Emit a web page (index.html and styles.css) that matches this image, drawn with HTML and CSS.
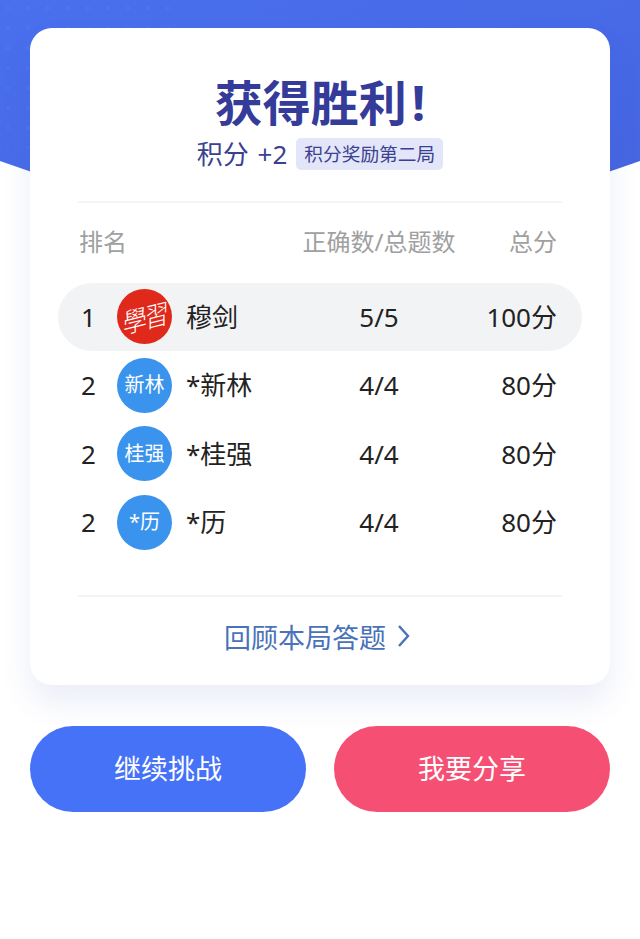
FILE: index.html
```html
<!DOCTYPE html>
<html lang="zh-CN">
  <head>
    <meta charset="UTF-8" />
    <meta name="viewport" content="width=device-width, initial-scale=1.0" />
    <title>获得胜利</title>
    <link rel="stylesheet" href="styles.css">
  </head>
  <body>
    <!-- Blue arc behind the card -->
    <svg class="hero-bg" width="640" height="230" viewBox="0 0 640 230">
      <defs>
        <linearGradient id="heroFill" x1="0" y1="0" x2="1" y2="1">
          <stop offset="0" stop-color="#4a70ee" />
          <stop offset="1" stop-color="#4564e0" />
        </linearGradient>
        <pattern id="heroDots" width="20" height="20" patternUnits="userSpaceOnUse">
          <circle cx="8" cy="8" r="2" fill="#fff" fill-opacity="0.03" />
        </pattern>
      </defs>
      <path d="M0 0H640V161Q320 278 0 161Z" fill="url(#heroFill)" />
      <rect x="0" y="0" width="180" height="28" fill="url(#heroDots)" />
      <rect x="0" y="28" width="30" height="120" fill="url(#heroDots)" />
    </svg>

    <div class="container">
      <div class="card">
        <div class="title">获得胜利<span class="mark">!</span></div>
        <div class="reward">
          <span class="points">积分 +2</span>
          <span class="tag">积分奖励第二局</span>
        </div>
        <hr />
        <div class="row head-row">
          <span class="rank-head">排名</span>
          <span class="count">正确数/总题数</span>
          <span class="total">总分</span>
        </div>
        <div class="row player current">
          <span class="rank">1</span>
          <span class="avatar logo"><span class="logo-text">學習</span></span>
          <span class="name">穆剑</span>
          <span class="count">5/5</span>
          <span class="total">100分</span>
        </div>
        <div class="row player">
          <span class="rank">2</span>
          <span class="avatar">新林</span>
          <span class="name">*新林</span>
          <span class="count">4/4</span>
          <span class="total">80分</span>
        </div>
        <div class="row player">
          <span class="rank">2</span>
          <span class="avatar">桂强</span>
          <span class="name">*桂强</span>
          <span class="count">4/4</span>
          <span class="total">80分</span>
        </div>
        <div class="row player">
          <span class="rank">2</span>
          <span class="avatar">*历</span>
          <span class="name">*历</span>
          <span class="count">4/4</span>
          <span class="total">80分</span>
        </div>
        <hr class="bottom-line" />
        <a class="review">
          回顾本局答题
          <svg width="13" height="24" viewBox="0 0 13 24">
            <path d="M2 2L11 12L2 22" fill="none" stroke="#4a72b8" stroke-width="2.4" />
          </svg>
        </a>
      </div>

      <div class="actions">
        <button class="btn btn-blue">继续挑战</button>
        <button class="btn btn-red">我要分享</button>
      </div>
    </div>
  </body>
</html>
```

FILE: styles.css
```css
* {
  box-sizing: border-box;
}

body {
  font-family: "Noto Sans", "Noto Sans CJK SC", sans-serif;
  margin: 0;
  padding: 0;
  background-color: #fff;
  color: #222;
  position: relative;
  height: 939px;
  overflow: hidden;
}

.hero-bg {
  position: absolute;
  left: 0;
  top: 0;
}

.container {
  position: relative;
  padding: 28px 30px 0;
}

.card {
  background-color: #fff;
  border-radius: 22px;
  height: 657px;
  padding: 45px 48px 0;
  box-shadow: 0 18px 30px rgba(70, 90, 190, 0.1);
}

.title {
  font-size: 48px;
  line-height: 60px;
  font-weight: bold;
  color: #353b99;
  text-align: center;
}

.mark {
  margin-left: 5px;
}

.reward {
  display: flex;
  justify-content: center;
  align-items: center;
  gap: 9px;
  margin-top: 4px;
  height: 34px;
}

.points {
  font-size: 26px;
  line-height: 34px;
  word-spacing: 2px;
  color: #3a4190;
}

.tag {
  font-size: 18.7px;
  line-height: 32px;
  padding: 0 8px;
  color: #3a4190;
  background-color: #e3e6f9;
  border-radius: 5px;
}

hr {
  margin: 30px 0 0;
  border: 0;
  border-top: 2px solid #f3f4f7;
}

.row {
  display: grid;
  grid-template-columns: 39px 55px 1fr 110px 110px;
  align-items: center;
}

.head-row {
  grid-template-columns: 1fr 190px 88px;
  height: 74px;
  font-size: 24px;
  color: #a0a0a0;
}

.head-row .rank-head {
  padding-left: 1px;
}

.count {
  text-align: center;
}

.head-row .total {
  padding-right: 5px;
}

.total {
  text-align: right;
}

.player {
  height: 68.5px;
  margin: 0 -20px;
  padding: 0 25px 0 20px;
  font-size: 26px;
  line-height: 34px;
  color: #222;
}

.current {
  background-color: #f2f3f5;
  border-radius: 35px;
  margin-top: 5.5px;
}

.rank {
  padding-left: 3px;
}

.avatar {
  width: 55px;
  height: 55px;
  border-radius: 50%;
  background-color: #3a94ee;
  color: #fff;
  font-size: 20px;
  display: flex;
  align-items: center;
  justify-content: center;
}

.logo {
  background-color: #df2a1b;
}

.logo-text {
  font-family: "Noto Sans CJK TC", sans-serif;
  font-size: 24px;
  font-weight: 300;
  letter-spacing: -2px;
  transform: skewY(-14deg) scale(1, 1.15);
  white-space: nowrap;
}

.name {
  padding-left: 14px;
}

.player .count {
  padding-right: 26px;
}

.bottom-line {
  margin-top: 38.5px;
}

.review {
  display: flex;
  justify-content: center;
  align-items: center;
  gap: 11px;
  height: 78px;
  padding-right: 6px;
  font-size: 27px;
  color: #4a72b8;
}

.actions {
  display: flex;
  justify-content: space-between;
  margin-top: 41px;
}

.btn {
  width: 276px;
  height: 86px;
  padding-bottom: 4px;
  border: none;
  border-radius: 43px;
  font-family: inherit;
  font-size: 27px;
  color: #fff;
}

.btn-blue {
  background-color: #4672f7;
}

.btn-red {
  background-color: #f55074;
}
```
